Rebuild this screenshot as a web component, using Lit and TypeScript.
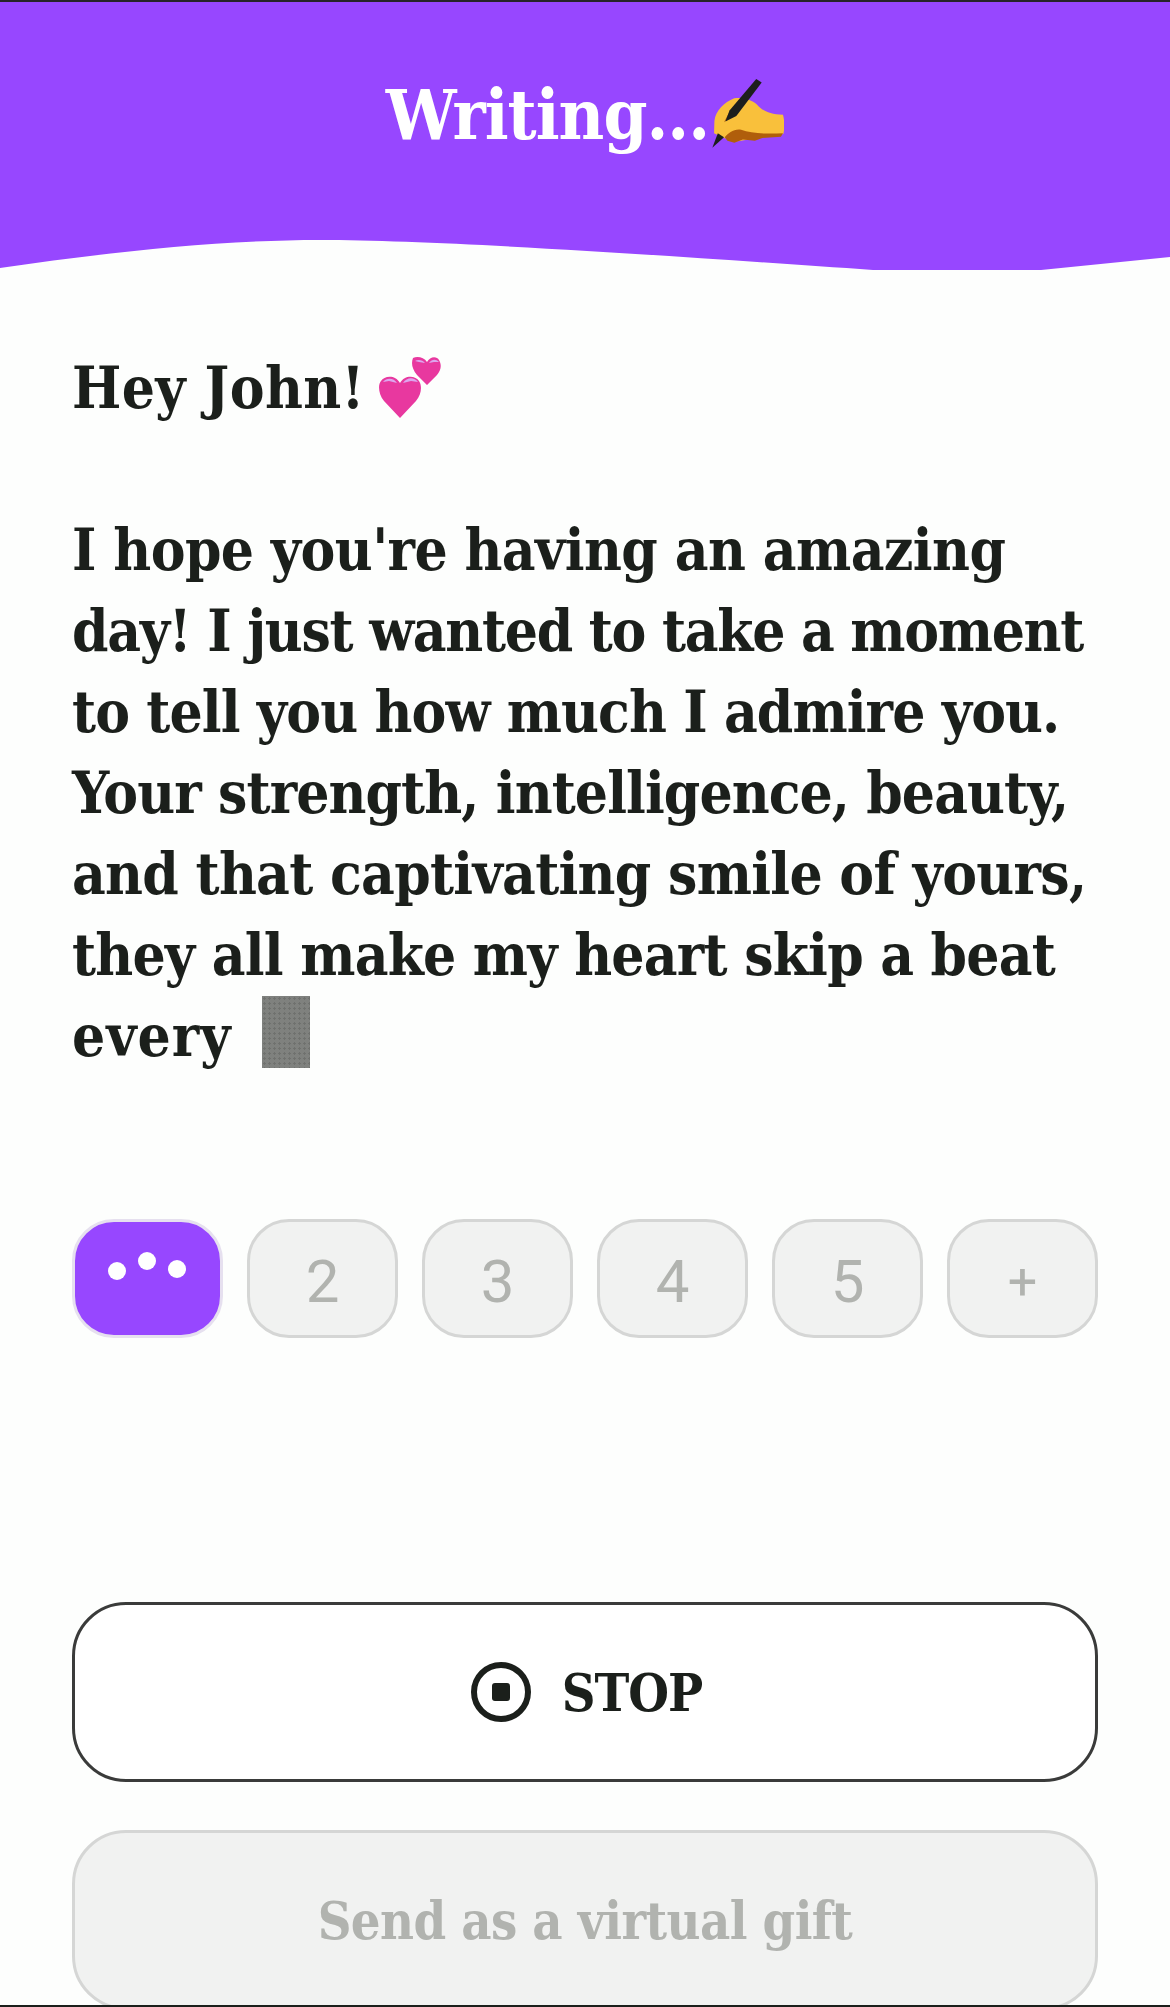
import { LitElement, html, css } from "lit";
import { customElement } from "lit/decorators.js";

const hand = html`<svg class="hand" viewBox="1115 65 210 204" aria-hidden="true">
  <path fill="#f9c03b" d="M1122 190 C1126 160 1150 136 1180 124 C1205 120 1230 128 1246 142 C1262 160 1282 172 1322 172 C1327 190 1327 212 1323 228 L1250 240 L1185 250 L1150 240 L1121 226 Z"/>
  <path fill="#b05e0b" d="M1152 238 C1162 226 1180 212 1200 216 C1230 228 1280 228 1322 226 L1316 236 L1262 240 L1240 248 L1205 244 L1180 254 L1160 248 Z"/>
  <path fill="#b05e0b" d="M1150 194 L1168 160 L1182 166 Z"/>
  <path fill="#1d1f1d" d="M1244 68 L1260 78 L1186 176 L1154 192 L1166 160 Z"/>
  <path fill="#1d1f1d" d="M1132 226 L1150 238 L1116 268 Z"/>
</svg>`;

const hearts = html`<svg class="hearts" viewBox="0 0 62 61" aria-hidden="true">
  <path fill="#e8389f" d="M34 1 C38 -1 45 0 48 5 C51 -1 58 -1 60 3 C63 8 62 13 58 18 L48 28 L38 18 C33 12 32 6 34 1 Z"/>
  <path fill="#dca6ee" d="M36 4 C39 2 44 3 46 6 L40 5 Z M50 6 C53 2 57 2 60 5 L55 5 Z"/>
  <path fill="#e8389f" d="M21 61 L5 44 C-1 37 -1 27 2 24 C5 19 16 17 21 26 C26 17 37 19 40 24 C43 28 43 37 37 44 Z"/>
  <path fill="#dca6ee" d="M4 25 C8 20 15 21 18 26 L10 24 Z M24 26 C28 20 35 20 39 25 L32 24 Z"/>
</svg>`;

const LINES: { t: string; ls: number }[] = [
  { t: "I hope you're having an amazing", ls: -0.61 },
  { t: "day! I just wanted to take a moment", ls: -1.29 },
  { t: "to tell you how much I admire you.", ls: -0.91 },
  { t: "Your strength, intelligence, beauty,", ls: -0.92 },
  { t: "and that captivating smile of yours,", ls: -0.72 },
  { t: "they all make my heart skip a beat", ls: -0.79 },
];

@customElement("app-root")
export class AppRoot extends LitElement {
  static styles = css`
    :host {
      display: flex;
      flex-direction: column;
      box-sizing: border-box;
      height: 2007px;
      overflow: hidden;
      background: #fdfefd;
      border-top: 2px solid #26242a;
      border-bottom: 2px solid #1b1f1b;
      font-family: "DejaVu Serif Condensed", "DejaVu Serif", serif;
    }
    .head { background: #9747ff; height: 236px; box-sizing: border-box; padding-top: 71px; flex: none; }
    .title { margin: 0; text-align: center; color: #fff; font-size: 70px; letter-spacing: -1px; line-height: 84px; font-weight: 700; white-space: nowrap; }
    .hand { width: 72px; height: 70px; vertical-align: -9px; margin-left: 3px; }
    .wave { display: block; width: 1170px; height: 32px; flex: none; }
    .main { flex: 1; padding: 78px 72px 0; display: flex; flex-direction: column; min-height: 0; }
    .msg { font-size: 58px; line-height: 81px; font-weight: 700; color: #1b1f1b; white-space: nowrap; }
    .line { display: block; min-height: 81px; }
    .hey { letter-spacing: 0.4px; }
    .hearts { width: 62px; height: 61px; vertical-align: -10px; margin-left: -4px; }
    .every { letter-spacing: 1px; }
    .cursor {
      display: inline-block; width: 48px; height: 72px; vertical-align: -12px; margin-left: 12px;
      background: #7f817e radial-gradient(circle, #6f716e 1px, transparent 1.2px) 0 0 / 5px 5px;
    }
    .pills { display: flex; gap: 24px; margin-top: 142px; }
    .pill {
      box-sizing: border-box; width: 151px; height: 119px; border-radius: 42px; padding-top: 6px;
      display: flex; align-items: center; justify-content: center;
      background: #f1f2f1; border: 3px solid #d5d6d5; color: #b1b3af;
      font: 400 60px Roboto, sans-serif;
    }
    .pill.plus { font-size: 52px; }
    .pill.on { background: #9747ff; border-color: #e6e0ef; padding-top: 0; }
    .pill.on svg { width: 145px; height: 113px; display: block; }
    .btn {
      box-sizing: border-box; height: 180px; border-radius: 54px; flex: none;
      display: flex; align-items: center; justify-content: center; font-size: 52px; font-weight: 700;
    }
    .stop { margin-top: 264px; padding-left: 3px; background: #fff; border: 3px solid #3a3b3a; color: #1b1f1b; gap: 31px; letter-spacing: -1px; }
    .stop svg { width: 60px; height: 60px; }
    .gift { margin-top: 48px; background: #f1f2f1; border: 3px solid #d5d6d5; color: #b1b3af; letter-spacing: -0.6px; }
  `;

  render() {
    return html`
      <header class="head"><h1 class="title">Writing...${hand}</h1></header>
      <svg class="wave" viewBox="0 238 1170 32" preserveAspectRatio="none" aria-hidden="true">
        <path fill="#9747ff" d="M0 238 H1170 V257 L1041 270 H873 C700 258 450 240 320 240 C220 240 110 252 0 268 Z"/>
      </svg>
      <main class="main">
        <div class="msg">
          <span class="line hey">Hey John! ${hearts}</span>
          <span class="line"></span>
          ${LINES.map((l) => html`<span class="line" style="letter-spacing:${l.ls}px">${l.t}</span>`)}
          <span class="line"><span class="every">every</span> <span class="cursor"></span></span>
        </div>
        <div class="pills">
          <div class="pill on"><svg viewBox="0 0 145 113" aria-hidden="true"><g fill="#fff"><circle cx="42" cy="49" r="9"/><circle cx="72" cy="39" r="9"/><circle cx="102" cy="47" r="9"/></g></svg></div>
          ${["2", "3", "4", "5"].map((n) => html`<div class="pill">${n}</div>`)}
          <div class="pill plus">+</div>
        </div>
        <div class="btn stop">
          <svg viewBox="0 0 60 60" aria-hidden="true"><circle cx="30" cy="30" r="27" fill="none" stroke="#1b1f1b" stroke-width="6"/><rect x="21" y="21" width="18" height="18" rx="3" fill="#1b1f1b"/></svg>
          <span>STOP</span>
        </div>
        <div class="btn gift">Send as a virtual gift</div>
      </main>
    `;
  }
}
